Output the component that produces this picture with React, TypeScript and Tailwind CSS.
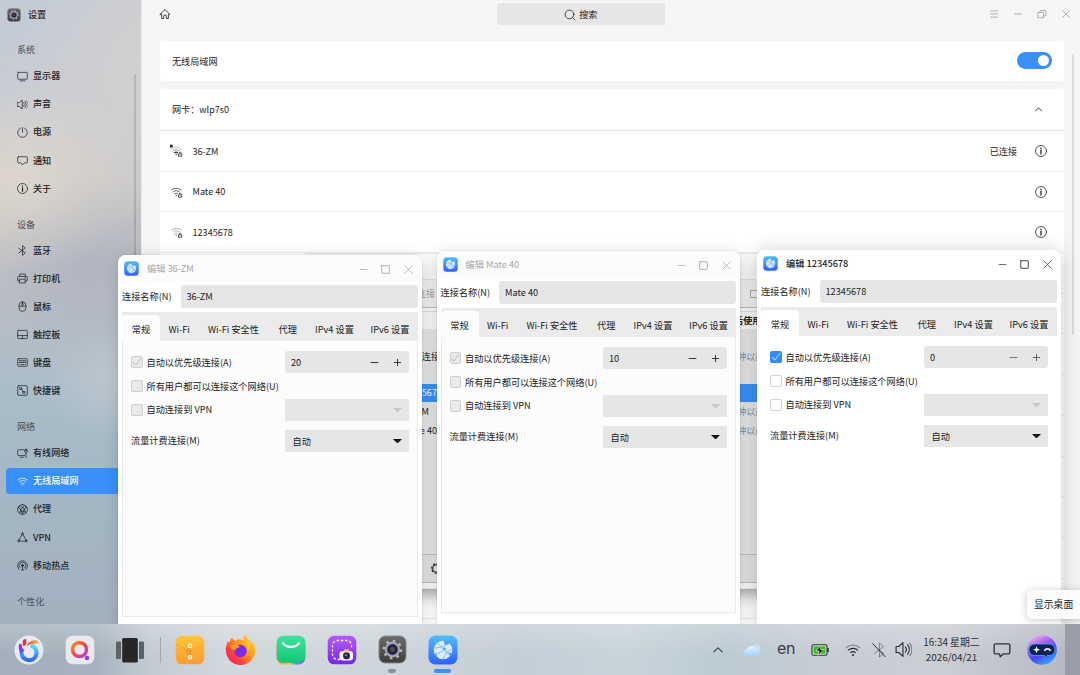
import type { ReactNode } from 'react';
import clsx from 'clsx';

interface NavItem {
  label: string;
  icon: ReactNode;
  active?: boolean;
}

interface NavSection {
  title: string;
  items: NavItem[];
}

interface ConnectionEditorProps {
  name: string;
  priority: string;
  focused?: boolean;
  className: string;
}

function Glyph({ children, className = 'h-[11px] w-[11px]', stroke = 1.05 }: { children: ReactNode; className?: string; stroke?: number }) {
  return (
    <svg
      viewBox="0 0 16 16"
      className={clsx('shrink-0', className)}
      fill="none"
      stroke="currentColor"
      strokeWidth={stroke}
      strokeLinecap="round"
      strokeLinejoin="round"
    >
      {children}
    </svg>
  );
}

const infoShape = (
  <>
    <circle cx="8" cy="8" r="7.3" />
    <path d="M8 7v5" strokeWidth="1.7" />
    <path d="M8 4.3v.2" strokeWidth="1.9" />
  </>
);

const speakerShape = (
  <>
    <path d="M1 5.2h2.5L7.5 1.5v13L3.5 10.8H1z" />
    <path d="M9.8 5.5a4 4 0 0 1 0 5M11.8 3.500a7 7 0 0 1 0 9" />
    <path d="M13.8 2a9.5 9.5 0 0 1 0 12" opacity=".5" />
  </>
);

const sections: NavSection[] = [
  {
    title: '系统',
    items: [
      { label: '显示器', icon: <path d="M2 2h12a1 1 0 0 1 1 1v8a1 1 0 0 1-1 1H2a1 1 0 0 1-1-1V3a1 1 0 0 1 1-1zM4.500 14.300h7" /> },
      { label: '声音', icon: speakerShape },
      { label: '电源', icon: <path d="M8 .8v7M5 1.700a7 7 0 1 0 6 0" /> },
      { label: '通知', icon: <path d="M2 2.500h12a1 1 0 0 1 1 1v7a1 1 0 0 1-1 1h-3.500L8 14.300l-2.200-2.800H2a1 1 0 0 1-1-1v-7a1 1 0 0 1 1-1z" /> },
      { label: '关于', icon: infoShape },
    ],
  },
  {
    title: '设备',
    items: [
      { label: '蓝牙', icon: <path d="M2.500 4.500l9.500 7-4 3.700V.8l4 3.700-9.500 7" /> },
      { label: '打印机', icon: <path d="M4 5V1.500h8V5M4 11.500H2a1 1 0 0 1-1-1V6a1 1 0 0 1 1-1h12a1 1 0 0 1 1 1v4.500a1 1 0 0 1-1 1h-2M4 9h8v5.500H4zM11.500 7h1" /> },
      { label: '鼠标', icon: <path d="M3 7a5 5.800 0 0 1 10 0v2.500a5 5.500 0 0 1-10 0zM3 7.500h10M8 1.200v2M8 3.200a1 1 0 0 1 1 1v1.500a1 1 0 0 1-2 0V4.200a1 1 0 0 1 1-1z" /> },
      { label: '触控板', icon: <path d="M2 2h12a1 1 0 0 1 1 1v10a1 1 0 0 1-1 1H2a1 1 0 0 1-1-1V3a1 1 0 0 1 1-1zM1 9.500h14M8 9.500V14" /> },
      {
        label: '键盘',
        icon: (
          <>
            <path d="M2 2.500h12a1 1 0 0 1 1 1v9a1 1 0 0 1-1 1H2a1 1 0 0 1-1-1v-9a1 1 0 0 1 1-1z" />
            <path d="M3.500 5.500h9.500M3.500 8h9.500" strokeDasharray="1.2 1.8" strokeWidth="1.5" />
            <path d="M4 11h.5M6.500 11h3.500M12 11h.5" />
          </>
        ),
      },
      { label: '快捷键', icon: <path d="M2.500 1h11A1.500 1.500 0 0 1 15 2.500v11a1.500 1.500 0 0 1-1.500 1.500h-11A1.500 1.500 0 0 1 1 13.500v-11A1.500 1.500 0 0 1 2.500 1zM4.500 4h2.500v2.500H4.500zM9 9.500h2.500V12H9zM7 6.500L9 9.500" /> },
    ],
  },
  {
    title: '网络',
    items: [
      { label: '有线网络', icon: <path d="M10 2.500H2a1 1 0 0 0-1 1V10a1 1 0 0 0 1 1h9M4.500 13.500h5M13 7v7M11.500 3.500h3.500v2l-1 1.500h-1.500l-1-1.500zM12.300 3.500V1.500M14.200 3.500V1.500" /> },
      { label: '无线局域网', active: true, icon: <path d="M.8 5.800a10.500 10.500 0 0 1 14.400 0M3.200 8.400a7 7 0 0 1 9.600 0M5.600 11a3.600 3.600 0 0 1 4.800 0M7.500 13.200h1" /> },
      { label: '代理', icon: <path d="M8 .8a7.200 7.200 0 1 0 0 14.400A7.200 7.200 0 0 0 8 .8zM8 5.500L5.500 7.500l1 3h3l1-3zM8 5.500L5 2.500l-3.500 3 4 2-1.500 5 2.500-2L8 15l1.500-4.500 3.500 2-2.500-5 4-2.500L11 2.500z" /> },
      { label: 'VPN', icon: <path d="M8 1.200a1.500 1.500 0 1 0 0 3 1.500 1.500 0 0 0 0-3zM7.200 4L3 11.500M8.800 4l4.200 7.500M4 13.300h8M2.500 11.700a1.400 1.400 0 1 0 0 2.800 1.400 1.400 0 0 0 0-2.800zM13.500 11.700a1.400 1.400 0 1 0 0 2.800 1.400 1.400 0 0 0 0-2.800z" /> },
      {
        label: '移动热点',
        icon: (
          <>
            <path d="M3.200 13.800a7.200 7.200 0 1 1 9.600 0M4.600 11.500a4.800 4.800 0 1 1 6.800 0M8 9v5.500M6.500 14.500h3" />
            <circle cx="8" cy="8" r="1.4" fill="currentColor" />
          </>
        ),
      },
    ],
  },
  { title: '个性化', items: [] },
];

const networks = [
  { ssid: '36-ZM', connected: true, tone: 'text-[#222]' },
  { ssid: 'Mate 40', connected: false, tone: 'text-[#444]' },
  { ssid: '12345678', connected: false, tone: 'text-[#999]' },
];

function GearAppIcon({ className }: { className: string }) {
  return (
    <svg viewBox="0 0 30 30" className={className}>
      <defs>
        <linearGradient id="gearBg" x1="0" y1="0" x2="0" y2="1">
          <stop offset="0" stopColor="#6b6b6b" />
          <stop offset="1" stopColor="#3e3e3e" />
        </linearGradient>
      </defs>
      <rect x="1" y="1" width="28" height="28" rx="6.5" fill="url(#gearBg)" stroke="#8d8f92" strokeWidth="1" />
      <circle cx="15" cy="15" r="9" fill="none" stroke="#b9bbbf" strokeWidth="2.4" strokeDasharray="2.6 4.47" />
      <circle cx="15" cy="15" r="7.9" fill="#aaadb2" />
      <circle cx="15" cy="15" r="5.6" fill="#20242c" stroke="#5a55d8" strokeWidth="1" />
      <circle cx="15" cy="15" r="2.6" fill="#4a4f57" />
    </svg>
  );
}

function NetworkAppIcon({ className }: { className: string }) {
  return (
    <svg viewBox="0 0 30 30" className={className}>
      <defs>
        <linearGradient id="netBg" x1="0" y1="0" x2="0" y2="1">
          <stop offset="0" stopColor="#4fc0fc" />
          <stop offset="1" stopColor="#2f5ffb" />
        </linearGradient>
      </defs>
      <rect x=".5" y=".5" width="29" height="29" rx="7" fill="url(#netBg)" />
      <circle cx="15" cy="15" r="9.3" fill="#dcebff" />
      <g fill="#4a9bfb">
        <path d="M15.500 6l3.500.2 2.500 2-4 2.500z" />
        <path d="M16 12l2 1.200-1 2-2-1.200z" />
        <path d="M6 18.500l2.500 1 1.200 3-2.200-1.500z" />
        <path d="M21 17.500l3 .5-1.500 2.500-1.500-.7z" />
      </g>
      <g fill="none" stroke="#69aefb" strokeWidth=".8">
        <path d="M6 13c5 0 9-1 12-4M7 19c4-.5 7-2 10-5l6 5.500M9.500 8l12 12.500M15.500 24c1-5 3.500-8 8-9.500" />
      </g>
    </svg>
  );
}

function SecureWifi({ connected, tone }: { connected: boolean; tone: string }) {
  return (
    <svg viewBox="0 0 14 14" className={clsx('h-[14px] w-[14px] shrink-0', tone)} fill="none" stroke="currentColor" strokeWidth=".8">
      <path d="M1 5.300a8 8 0 0 1 10.500 0" opacity={connected ? 0.35 : 1} />
      <path d="M2.700 7.200a5.300 5.300 0 0 1 7 0" opacity={connected ? 0.6 : 1} />
      <path d="M4.300 9a3 3 0 0 1 3.700-.1" strokeWidth={connected ? 1.2 : 0.8} />
      <circle cx="6.200" cy="10.4" r=".7" fill="currentColor" stroke="none" />
      <path d="M8.500 10h3.300v2.300H8.500zM9.200 10V9.200a1 1 0 0 1 2 0V10" stroke="#333" />
      {connected && <path d="M0 .700h2.600v2.800H0z" fill="#222" stroke="none" />}
    </svg>
  );
}

function Sidebar() {
  return (
    <aside className="relative h-full w-[141px] shrink-0 bg-[radial-gradient(ellipse_130px_95px_at_20px_178px,#dcd6ce_0%,#dcd6ce00_100%),radial-gradient(ellipse_90px_90px_at_85px_265px,#b0b5c1_0%,#b0b5c100_100%),radial-gradient(ellipse_130px_170px_at_141px_60px,#d2d0d0_0%,#d2d0d000_100%),radial-gradient(ellipse_90px_60px_at_130px_380px,#bfc8cf_0%,#bfc8cf00_100%),linear-gradient(180deg,#c2cad6_0%,#cbcdd2_20%,#c5c4c3_34%,#babdc4_47%,#a9bdc9_63%,#a5b7c4_78%,#a3b1bf_100%)] text-[#1f2225]">
      <div className="flex h-[38px] items-start gap-[7px] pt-[7.5px] pl-[7px]">
        <GearAppIcon className="h-[14px] w-[14px]" />
        <span className="text-[9.1px] leading-[13px] font-medium">设置</span>
      </div>
      <nav className="flex flex-col gap-2.5">
        {sections.map((section) => (
          <div key={section.title}>
            <div className="flex h-6 items-center pl-[17px] text-[9.1px] text-[#4a4e53]">{section.title}</div>
            {section.items.map((item) => (
              <div key={item.label} className="flex h-[28.1px] items-center pl-[6px]">
                <div className={clsx('flex h-[26px] w-[128px] items-center gap-[5px] rounded pl-[11px]', item.active && 'bg-[#3990fb] text-white')}>
                  <Glyph>{item.icon}</Glyph>
                  <span className="text-[9.1px] font-medium">{item.label}</span>
                </div>
              </div>
            ))}
          </div>
        ))}
      </nav>
      {/* Scroll thumb */}
      <div className="absolute top-[74px] right-[5px] h-[400px] w-[2.5px] rounded bg-black/12" />
    </aside>
  );
}

function SettingsPage() {
  return (
    <main className="relative flex-1 border-l border-[#ececec] bg-[#f5f5f5] text-[9.1px] text-[#222]">
      <header className="flex h-[28px] items-center pr-[9px] pl-[17px]">
        <Glyph className="h-[12px] w-[12px]" stroke={1.1}>
          <path d="M1.500 8.500L8 2l6.500 6.500H12.500V14H9.800v-3a1.800 1.800 0 0 0-3.600 0v3H3.500V8.500z" />
        </Glyph>
        <div className="ml-[326px] flex h-[22px] w-[168px] items-center justify-center gap-[3.5px] rounded-[3px] bg-[#e6e6e6] pt-px pr-px">
          <Glyph className="h-[12px] w-[12px]">
            <circle cx="7.3" cy="7.3" r="5.8" />
            <path d="M11.500 11.500l3 3" />
          </Glyph>
          <span>搜索</span>
        </div>
        <div className="ml-auto flex gap-[14px] text-[#8e8e8e]">
          <Glyph className="h-[10px] w-[10px]"><path d="M2.500 3h11M2.500 8h11M2.500 13h11" /></Glyph>
          <Glyph className="h-[10px] w-[10px]"><path d="M2.500 8h11" /></Glyph>
          <Glyph className="h-[10px] w-[10px]"><path d="M2 5.500h8.500V14H2zM5 5.500V2.500h9v8.500h-3.500" /></Glyph>
          <Glyph className="h-[10px] w-[10px]"><path d="M2.500 2.500l11 11M13.500 2.500l-11 11" /></Glyph>
        </div>
      </header>

      <div className="mt-[13px] flex flex-col gap-2 pr-4 pl-[17.5px]">
        <section className="flex h-10 items-center justify-between rounded bg-white pr-3 pl-[12.5px]">
          <span className="pt-px">无线局域网</span>
          <div className="mb-[1.5px] flex h-[17px] w-[35px] items-center justify-end rounded-full bg-[#3a90f8] pr-[3px]">
            <div className="h-[11.5px] w-[11.5px] rounded-full bg-white" />
          </div>
        </section>

        <section className="rounded-t bg-white">
          <div className="flex h-[42px] items-center justify-between border-b border-[#e3e3e3] pr-[21px] pl-[12.5px]">
            <span className="pt-px">网卡：wlp7s0</span>
            <Glyph className="h-[9px] w-[9px]" stroke={1.6}><path d="M2.500 10.500L8 5l5.500 5.500" /></Glyph>
          </div>
          {networks.map((network) => (
            <div key={network.ssid} className="flex h-[40.7px] items-center border-b border-[#efefef] pr-[17.5px] pl-[10.5px]">
              <SecureWifi connected={network.connected} tone={network.tone} />
              <span className="ml-[8.5px] pt-px">{network.ssid}</span>
              {network.connected && <span className="ml-auto pt-px">已连接</span>}
              <Glyph className={clsx('h-[12px] w-[12px]', network.connected ? 'ml-[17.5px]' : 'ml-auto')}>{infoShape}</Glyph>
            </div>
          ))}
          {/* Rows continue behind the open editors */}
          {Array.from({ length: 10 }, (_, i) => (
            <div key={i} className="h-[40.7px] border-b border-[#efefef]" />
          ))}
        </section>
      </div>
      <div className="absolute top-[54px] right-[6px] h-[281px] w-[2.5px] rounded bg-[#dcdcdc]" />
    </main>
  );
}

/* Connection list that sits behind the three editors */
function ConnectionsWindow() {
  return (
    <div className="absolute top-[253px] left-[300px] flex h-[336px] w-[480px] flex-col rounded-t-lg border border-[#e8e8e8] bg-[#f8f8f8] text-[9.1px] whitespace-nowrap text-[#222] shadow-[0_10px_14px_-4px_rgba(0,0,0,0.35)]">
      <div className="h-[26px] border-b border-[#e2e2e2] bg-linear-to-b from-[#fdfdfd] to-[#f5f5f5]" />
      <div className="flex h-[28px] items-center border-b border-[#b9b9b9] bg-[#eeeeee] text-[#9a9a9a]">
        <span className="w-[134px] text-right">搜索连接</span>
        <div className="ml-[315px] h-[8px] w-[8px] border border-[#aaa]" />
      </div>
      <div className="mt-[3px] flex h-[18px] items-center border-t border-[#ddd] bg-[#f6f6f6] pt-px font-bold">
        <span className="ml-[424px]">最后使用</span>
      </div>
      <div className="flex h-[226px] flex-col border-b border-[#c2c2c2] bg-[#e5e5e5] pt-[19px] text-[9.1px]">
        <div className="flex h-[18px] items-center">
          <span className="w-[139px] text-right">无线连接</span>
          <span className="ml-[281px] text-[#7d8ea3]">1 分钟以前</span>
        </div>
        <div className="mt-[18px] flex h-[18px] items-center bg-[#3990f8] text-white">
          <span className="w-[141px] text-right">12345678</span>
          <span className="ml-[280px]">现在</span>
        </div>
        <div className="mt-px flex h-[18.5px] items-center">
          <span className="w-[128px] text-right">36-ZM</span>
          <span className="ml-[292px] text-[#7d8ea3]">1 分钟以前</span>
        </div>
        <div className="flex h-[18.5px] items-center">
          <span className="w-[136px] text-right">Mate 40</span>
          <span className="ml-[284px] text-[#7d8ea3]">1 分钟以前</span>
        </div>
      </div>
      <div className="flex h-[28px] items-center border-b border-[#bbb] bg-[#e2e2e2] pl-[130px]">
        <Glyph className="h-[11px] w-[11px]" stroke={1.6}>
          <circle cx="8" cy="8" r="5.5" />
          <circle cx="8" cy="8" r="7" strokeDasharray="2 3.5" />
        </Glyph>
      </div>
    </div>
  );
}

function Checkbox({ checked, focused }: { checked?: boolean; focused?: boolean }) {
  return (
    <div
      className={clsx(
        'flex h-[11.5px] w-[11.5px] shrink-0 items-center justify-center rounded-[2px] border',
        focused && checked && 'border-[#2f8bff] bg-[#2f8bff] text-white',
        focused && !checked && 'border-[#d2d2d2] bg-white',
        !focused && 'border-[#cfcfcf] bg-[#e9e9e9] text-[#b4b4b4]',
      )}
    >
      {checked && <Glyph className="h-[10px] w-[10px]" stroke={1.3}><path d="M2 8.500L6 13l8-10.500" /></Glyph>}
    </div>
  );
}

function ConnectionEditor({ name, priority, focused, className }: ConnectionEditorProps) {
  const surface = focused ? 'bg-white' : 'bg-[#fcfcfc]';

  return (
    <div
      className={clsx(
        'absolute flex h-[380px] flex-col overflow-hidden rounded-t-[8px] bg-white text-[9.2px] whitespace-nowrap text-[#222]',
        focused ? 'shadow-[0_2px_20px_rgba(0,0,0,0.22)]' : 'shadow-[0_0_0_1px_rgba(0,0,0,0.04),0_2px_16px_rgba(0,0,0,0.15)]',
        className,
      )}
    >
      {/* Title bar */}
      <div className={clsx('flex h-[27px] shrink-0 items-center pr-[8px] pl-[6px]', surface, !focused && 'text-[#a9a9a9]')}>
        <NetworkAppIcon className="h-[15px] w-[15px]" />
        <span className={clsx('ml-2 pt-px', focused && 'font-medium')}>编辑 {name}</span>
        <div className={clsx('ml-auto flex gap-[11.7px] pt-px', focused ? 'text-[#333]' : 'text-[#a5a5a5]')}>
          <Glyph className="h-[11px] w-[11px]"><path d="M3 8h10" /></Glyph>
          <Glyph className="h-[11px] w-[11px]" stroke={1.3}><path d="M3 2.500h10a.5.5 0 0 1 .5.5v10a.5.5 0 0 1-.5.5H3a.5.5 0 0 1-.5-.5V3a.5.5 0 0 1 .5-.5z" /></Glyph>
          <Glyph className="h-[11px] w-[11px]"><path d="M2.500 2.500l11 11M13.500 2.500l-11 11" /></Glyph>
        </div>
      </div>

      <div className="mt-[3px] flex h-[23px] shrink-0 items-center pr-[4px] pl-[4px]">
        <span className="w-[58.5px] pt-px">连接名称(N)</span>
        <div className="flex h-[23px] flex-1 items-center rounded-[3px] bg-[#e6e6e6] pt-px pl-[6px]">{name}</div>
      </div>

      <div className={clsx('mx-[4px] mt-[4px] h-[305px] shrink-0 border', surface, focused ? 'border-white' : 'border-[#eaeaea]')}>
        {/* Tabs */}
        <div className="-mx-px -mt-px flex h-[29px] items-end bg-[#ebebeb]">
          <div className={clsx('flex h-[26px] w-[38px] items-center justify-center rounded-t-[4px] pt-[3px]', surface)}>常规</div>
          <div className="flex h-[26px] items-center pt-[3px]">
            <span className="ml-[8.5px] w-[39.5px]">Wi-Fi</span>
            <span className="w-[70.5px]">Wi-Fi 安全性</span>
            <span className="w-[36.5px]">代理</span>
            <span className="w-[55.5px]">IPv4 设置</span>
            <span>IPv6 设置</span>
          </div>
        </div>

        <div className="flex flex-col pt-[9px] pr-[8px] pl-[8px]">
          <div className="flex h-6 items-center gap-1">
            <Checkbox checked focused={focused} />
            <span className="flex-1 pt-px">自动以优先级连接(A)</span>
            <div className="flex h-[22px] w-[124px] items-center rounded-[3px] bg-[#e6e6e6] pr-[6px] pl-[6px]">
              <span className="flex-1 pt-px">{priority}</span>
              <Glyph className={clsx('h-[11px] w-[11px]', focused && 'text-[#666]')} stroke={1.3}><path d="M3 8h10" /></Glyph>
              <Glyph className={clsx('ml-[12px] h-[11px] w-[11px]', focused && 'text-[#555]')} stroke={1.3}><path d="M3.500 8h9M8 3.500v9" /></Glyph>
            </div>
          </div>
          <div className="flex h-6 items-center gap-1">
            <Checkbox focused={focused} />
            <span className="pt-px">所有用户都可以连接这个网络(U)</span>
          </div>
          <div className="flex h-6 items-center gap-1">
            <Checkbox focused={focused} />
            <span className="flex-1">自动连接到 VPN</span>
            <div className="flex h-[22px] w-[124px] items-center justify-end bg-[#e6e6e6] pr-[7px] text-[#c6c6c6]">
              <svg viewBox="0 0 8 4" className="h-[4.5px] w-[9px]" fill="currentColor"><path d="M0 0h8L4 4z" /></svg>
            </div>
          </div>
          <div className="mt-[7px] flex h-6 items-center">
            <span className="flex-1">流量计费连接(M)</span>
            <div className="flex h-[22px] w-[124px] items-center justify-between bg-[#e6e6e6] pr-[7px] pl-[7.5px]">
              <span className="pt-px">自动</span>
              <svg viewBox="0 0 8 4" className="h-[4.5px] w-[9px]" fill="#111"><path d="M0 0h8L4 4z" /></svg>
            </div>
          </div>
        </div>
      </div>
    </div>
  );
}

function DockSlot({ children, indicator }: { children: ReactNode; indicator?: string }) {
  return (
    <div className="relative flex h-full w-[50.5px] items-center justify-center">
      {children}
      {indicator && <div className={clsx('absolute bottom-[2px] h-[4px] rounded-full', indicator)} />}
    </div>
  );
}

function Dock() {
  return (
    <div className="flex h-full items-center pl-[4.2px]">
      <DockSlot>
        <svg viewBox="0 0 30 30" className="h-[30px] w-[30px]" fill="none">
          <defs>
            <linearGradient id="startRing" x1="0" y1="0" x2="0" y2="1">
              <stop offset="0" stopColor="#62dcf8" />
              <stop offset="1" stopColor="#2f6bf5" />
            </linearGradient>
            <linearGradient id="startPetal" x1="0" y1="0" x2="1" y2="0">
              <stop offset="0" stopColor="#e8463c" />
              <stop offset="1" stopColor="#fbb04a" />
            </linearGradient>
          </defs>
          <circle cx="15" cy="15" r="14.5" fill="#e8e8ee" />
          <path d="M16.500 10.300a7.500 7.500 0 1 1-7.500 3" stroke="url(#startRing)" strokeWidth="4" />
          <path d="M4.800 9.500l2.800-.8c.2 3 .7 5 2.200 6.800l-2.600 3.500C5 16 4.500 13 4.800 9.500z" fill="#7b3df0" />
          <path d="M9 5l3-1.200.6 4.700-2.600 3C8.500 10 8.300 8 9 5z" fill="#d93450" />
          <path d="M12.500 11.500c1.500-4.500 5-6.800 10.800-6.300l.8 3.700c-4.600-.8-8 0-11.600 2.600z" fill="url(#startPetal)" />
        </svg>
      </DockSlot>
      <DockSlot>
        <svg viewBox="0 0 30 30" className="h-[30px] w-[30px]" fill="none">
          <defs>
            <linearGradient id="searchRing" x1="0" y1="0" x2="1" y2="1">
              <stop offset="0" stopColor="#ff8a1f" />
              <stop offset=".5" stopColor="#f5453f" />
              <stop offset="1" stopColor="#b13af0" />
            </linearGradient>
          </defs>
          <rect x=".7" y=".7" width="28.600" height="28.600" rx="7" fill="#e9e9f0" />
          <circle cx="14.500" cy="14.500" r="7" stroke="url(#searchRing)" strokeWidth="3.400" />
          <circle cx="22" cy="23" r="2.200" fill="#8d3df0" />
        </svg>
      </DockSlot>
      <DockSlot>
        <svg viewBox="0 0 30 30" className="h-[30px] w-[30px]">
          <rect x="1" y="6.500" width="5" height="17.500" rx="1" fill="#5c6266" />
          <rect x="24" y="6.500" width="5" height="17.500" rx="1" fill="#5c6266" />
          <rect x="7.200" y="3" width="15.600" height="24.500" rx="1.500" fill="#262626" />
        </svg>
      </DockSlot>
      <div className="mr-[4.500px] ml-[4px] h-[26px] w-px bg-[#a3a9ae]" />
      <DockSlot>
        <svg viewBox="0 0 30 30" className="h-[30px] w-[30px]">
          <defs>
            <linearGradient id="filesBg" x1="0" y1="0" x2="0" y2="1">
              <stop offset="0" stopColor="#fdc63c" />
              <stop offset="1" stopColor="#fd9a33" />
            </linearGradient>
          </defs>
          <rect x=".7" y=".7" width="28.600" height="28.600" rx="6.500" fill="url(#filesBg)" />
          <path d="M1 9l14 8 14-8" fill="none" stroke="#f3a52d" strokeWidth="1" />
          <path d="M15 11v11M13.500 13.500c-2 3-2 5-.5 7" stroke="#d07d15" strokeWidth=".8" fill="none" />
          <circle cx="15" cy="11" r="1.700" fill="#fdae36" stroke="#fff3d8" strokeWidth="1.400" />
          <circle cx="15" cy="22.300" r="1.700" fill="#fdae36" stroke="#fff3d8" strokeWidth="1.400" />
        </svg>
      </DockSlot>
      <DockSlot>
        <svg viewBox="0 0 30 30" className="h-[31px] w-[31px]">
          <defs>
            <linearGradient id="foxBody" x1="1" y1="0" x2="0" y2="1">
              <stop offset="0" stopColor="#ffe13a" />
              <stop offset=".45" stopColor="#ff9520" />
              <stop offset=".7" stopColor="#ff3f3c" />
              <stop offset="1" stopColor="#e8177f" />
            </linearGradient>
          </defs>
          <path d="M19.500 0c-1.500 2-2 4-1.500 6-3-1.500-6-1-8 .5C8.500 6 7.500 5 6.800 3.600 5.300 5 4.600 6.500 4.300 8.300L2.200 7C2.500 9 1.600 10 1 12.500-.5 22 6 30 15 30c8.500 0 14.500-6.500 14.500-14.500 0-3-1-5.500-2.500-7.500l-.5 1.500C25 6 21 5 19.500 0z" fill="url(#foxBody)" />
          <circle cx="15" cy="16.500" r="6" fill="#7b2be8" />
          <path d="M5 11.500c4-2.500 7-1 9.500 1-2 .5-4 1-4 3C7 15.500 5.500 14 5 11.500z" fill="#ff9a1e" />
          <path d="M19 6.500c2.500 2 4 5 3.500 9 2-2 2.200-5 1.500-7z" fill="#ffd23a" />
        </svg>
      </DockSlot>
      <DockSlot>
        <svg viewBox="0 0 30 30" className="h-[30px] w-[30px]">
          <defs>
            <linearGradient id="storeBg" x1="0" y1="0" x2="0" y2="1">
              <stop offset="0" stopColor="#3fe39b" />
              <stop offset="1" stopColor="#11c877" />
            </linearGradient>
            <linearGradient id="storeEdge">
              <stop offset="0" stopColor="#f5803e" />
              <stop offset=".45" stopColor="#f5c63e" />
              <stop offset=".65" stopColor="#2ba8f0" />
              <stop offset="1" stopColor="#b04bea" />
            </linearGradient>
          </defs>
          <rect x=".7" y="4" width="28.600" height="25.500" rx="6.500" fill="url(#storeEdge)" />
          <rect x=".7" y=".7" width="28.600" height="27" rx="6.500" fill="url(#storeBg)" />
          <path d="M6.500 7.500a9.500 8 0 0 0 17 0" fill="none" stroke="#fff" strokeWidth="2.400" />
        </svg>
      </DockSlot>
      <DockSlot>
        <svg viewBox="0 0 30 30" className="h-[30px] w-[30px]">
          <defs>
            <linearGradient id="shotBg" x1="0" y1="0" x2="0" y2="1">
              <stop offset="0" stopColor="#b55bf8" />
              <stop offset="1" stopColor="#7627e6" />
            </linearGradient>
          </defs>
          <rect x=".7" y=".7" width="28.600" height="28.600" rx="6.500" fill="url(#shotBg)" />
          <path d="M13 24.500h-2.500a5 5 0 0 1-5-5v-9a5 5 0 0 1 5-5h9a5 5 0 0 1 5 5V14" fill="none" stroke="#fff" strokeWidth="1.300" strokeDasharray="2.500 1.800" />
          <rect x="12.500" y="16" width="13.500" height="9.500" rx="3" fill="#f5f1fb" />
          <rect x="17" y="14.300" width="5" height="2.200" rx="1" fill="#fdb64c" />
          <circle cx="19.500" cy="20.800" r="3.500" fill="#22262f" />
          <circle cx="19" cy="20.300" r="1.200" fill="#6f7f97" />
        </svg>
      </DockSlot>
      <DockSlot indicator="w-[8px] bg-[#8b9297]">
        <GearAppIcon className="h-[29px] w-[29px]" />
      </DockSlot>
      <DockSlot indicator="w-[17px] bg-[#3a90f8]">
        <NetworkAppIcon className="h-[30px] w-[30px]" />
      </DockSlot>
    </div>
  );
}

function Tray() {
  return (
    <div className="ml-auto flex h-full items-center text-[#2b2e31]">
      <div className="flex w-[29px] justify-center">
        <Glyph className="h-[12px] w-[12px]" stroke={1.4}><path d="M2.500 10.500l5.500-5.500 5.500 5.500" /></Glyph>
      </div>
      <div className="flex w-[38px] justify-center">
        <svg viewBox="0 0 18 14" className="h-[14px] w-[18px]">
          <defs>
            <linearGradient id="cloud" x1="0" y1="0" x2="0" y2="1">
              <stop offset="0" stopColor="#e6f2fe" />
              <stop offset="1" stopColor="#a5cff8" />
            </linearGradient>
          </defs>
          <circle cx="13" cy="5.500" r="4.300" fill="#c2defa" />
          <path d="M4 13a3.400 3.400 0 0 1 0-6.800A5 5 0 0 1 13.300 6a3.600 3.600 0 0 1 .4 7z" fill="url(#cloud)" />
        </svg>
      </div>
      <div className="w-[31px] pb-[3px] text-center font-['Inter'] text-[16px] leading-none font-normal tracking-[-0.5px] text-[#3a3d40]">en</div>
      <div className="flex w-[36px] justify-center">
        <svg viewBox="0 0 18 14" className="h-[14px] w-[18px]">
          <rect x="1" y="1.700" width="15" height="10.600" rx="1.500" fill="#e3eadf" stroke="#2b2e31" strokeWidth="1.100" />
          <rect x="2.500" y="3.200" width="12" height="7.600" fill="#3bbf1e" />
          <path d="M17 5v4" stroke="#2b2e31" strokeWidth="1.500" />
          <path d="M10.500 2L5 8h3l-1 4.500L13 6.500H9.500z" fill="#222" stroke="#dfe8da" strokeWidth=".7" />
        </svg>
      </div>
      <div className="flex w-[31px] justify-center">
        <svg viewBox="0 0 16 16" className="h-[16px] w-[16px]" fill="none" stroke="currentColor" strokeWidth="1.100">
          <path d="M.8 6a10.500 10.500 0 0 1 14.400 0" opacity=".4" />
          <path d="M3 8.400a7.200 7.200 0 0 1 10 0M5.300 10.900a4 4 0 0 1 5.400 0" />
          <circle cx="8" cy="13" r="1.100" fill="currentColor" stroke="none" />
        </svg>
      </div>
      <div className="flex w-[20px] justify-center">
        <svg viewBox="0 0 16 16" className="h-[16px] w-[16px]" fill="none" stroke="currentColor" strokeWidth="1">
          <path d="M3.500 11.500l9-7L8.500 1v14l4-3.500-4-3.500" opacity=".45" />
          <path d="M1.500 1.500l13 13.500" />
        </svg>
      </div>
      <div className="flex w-[29px] justify-center">
        <Glyph className="h-[17px] w-[17px]" stroke={1.05}>{speakerShape}</Glyph>
      </div>
      <div className="w-[68px] pt-px text-center text-[9.9px] leading-[15.5px]">
        <div>16:34 星期二</div>
        <div>2026/04/21</div>
      </div>
      <div className="flex w-[33px] justify-center">
        <Glyph className="h-[18px] w-[18px]" stroke={1.15}>
          <path d="M2.300 2.500h11.400a1.300 1.300 0 0 1 1.300 1.300v6.400a1.300 1.300 0 0 1-1.300 1.300H9L6.500 14l-.8-2.500H2.300A1.300 1.300 0 0 1 1 10.200V3.800a1.300 1.300 0 0 1 1.300-1.300z" />
        </Glyph>
      </div>
      <div className="flex w-[46px] justify-center">
        <svg viewBox="0 0 30 30" className="h-[30px] w-[30px]">
          <defs>
            <linearGradient id="robot" x1=".2" y1="0" x2=".7" y2="1">
              <stop offset="0" stopColor="#f3b6f5" />
              <stop offset=".35" stopColor="#a55cf2" />
              <stop offset=".65" stopColor="#4a45f2" />
              <stop offset="1" stopColor="#2fb2f7" />
            </linearGradient>
          </defs>
          <circle cx="15" cy="15" r="14.800" fill="url(#robot)" />
          <path d="M7.500 9h15a5.500 5.500 0 0 1 5.500 5.500v.5a5.500 5.500 0 0 1-5.500 5.500h-2.500l-2 3-.3-3H7.500A5.500 5.500 0 0 1 2 15v-.5A5.500 5.500 0 0 1 7.500 9z" fill="#0d2357" stroke="#3fc6f5" strokeWidth=".7" />
          <path d="M9.500 11.300l1 2.500 2.500 1-2.500 1-1 2.500-1-2.500-2.500-1 2.500-1z" fill="#fff" />
          <path d="M17.500 15.800a3.200 2.800 0 0 1 6 0" fill="none" stroke="#e6f3ff" strokeWidth="1.800" />
        </svg>
      </div>
      <div className="h-full w-[15.5px] bg-[#989da7]" />
    </div>
  );
}

export default function App() {
  return (
    <div className="flex h-[675px] w-[1080px] flex-col overflow-hidden font-['Noto_Sans_CJK_SC',sans-serif]">
      <div className="relative flex h-[624px] overflow-hidden">
        <Sidebar />
        <SettingsPage />
        <ConnectionsWindow />
        <ConnectionEditor name="36-ZM" priority="20" className="top-[255px] left-[118px] w-[304px]" />
        <ConnectionEditor name="Mate 40" priority="10" className="top-[251px] left-[436.5px] w-[303.5px]" />
        <ConnectionEditor name="12345678" priority="0" focused className="top-[250px] left-[757px] w-[304px]" />

        {/* Tooltip of the show-desktop button */}
        <div className="absolute top-[590px] left-[1027px] flex h-[29px] w-[58px] items-center rounded-[5px] bg-[#fbfbfb] pl-[7px] text-[9.8px] text-[#222] shadow-[0_1px_8px_rgba(0,0,0,0.22)]">
          显示桌面
        </div>
      </div>

      <div className="flex h-[51px] items-center bg-[linear-gradient(180deg,#ffffff33,#ffffff00_60%),linear-gradient(90deg,#a3b0bc_0%,#a6b3be_9%,#c4ccd3_14%,#d2d8dc_21%,#ced6db_35%,#c3ced6_48%,#c8d4da_58%,#bccbd3_67%,#c9cdd4_78%,#cbcdd3_88%,#b5b9c3_99%)]">
        <Dock />
        <Tray />
      </div>
    </div>
  );
}
